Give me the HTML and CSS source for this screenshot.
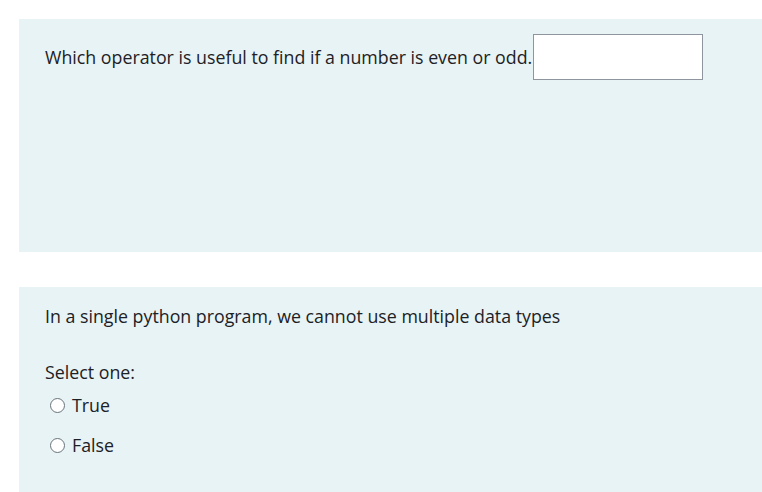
FILE: index.html
```html
<!DOCTYPE html>
<html>
<head>
<meta charset="utf-8">
<link rel="stylesheet" href="styles.css">
</head>
<body>
<div class="page">
  <div class="que que-short">
    <div class="qtext">Which operator is useful to find if a number is even or odd.<input class="answer" type="text"></div>
  </div>
  <div class="que que-tf">
    <div class="qtext">In a single python program, we cannot use multiple data types</div>
    <div class="prompt">Select one:</div>
    <div class="options">
      <label class="opt"><span class="radio"></span>True</label>
      <label class="opt"><span class="radio"></span>False</label>
    </div>
  </div>
</div>
</body>
</html>
```
FILE: styles.css
```css
html, body {
  margin: 0;
  padding: 0;
  background: #ffffff;
}
body {
  font-family: "Open Sans", "Noto Sans", sans-serif;
  color: #1d2125;
  font-size: 17.8px;
  line-height: 24px;
  overflow: hidden;
}
.page {
  padding: 19px 0 0 19px;
  display: flex;
  flex-direction: column;
  gap: 35px;
}
.que {
  background: #e7f3f5;
  padding: 0 26px;
}
.que-short {
  height: 233px;
  box-sizing: border-box;
  padding-top: 15px;
}
.que-short .qtext {
  display: flex;
  align-items: center;
}
.answer {
  width: 170px;
  height: 46px;
  box-sizing: border-box;
  border: 1px solid #8f959e;
  background: #fff;
  margin: 0 0 0 1px;
  padding: 0;
  outline: none;
}
.que-tf {
  height: 205px;
  box-sizing: border-box;
  padding-top: 17px;
}
.prompt {
  margin-top: 32px;
}
.options {
  display: flex;
  flex-direction: column;
  gap: 16px;
  margin-top: 9px;
}
.opt {
  display: flex;
  align-items: center;
  gap: 7px;
  padding-left: 5px;
}
.radio {
  width: 13px;
  height: 13px;
  border: 1px solid #6a737b;
  border-radius: 50%;
  background: #fff;
}
```
